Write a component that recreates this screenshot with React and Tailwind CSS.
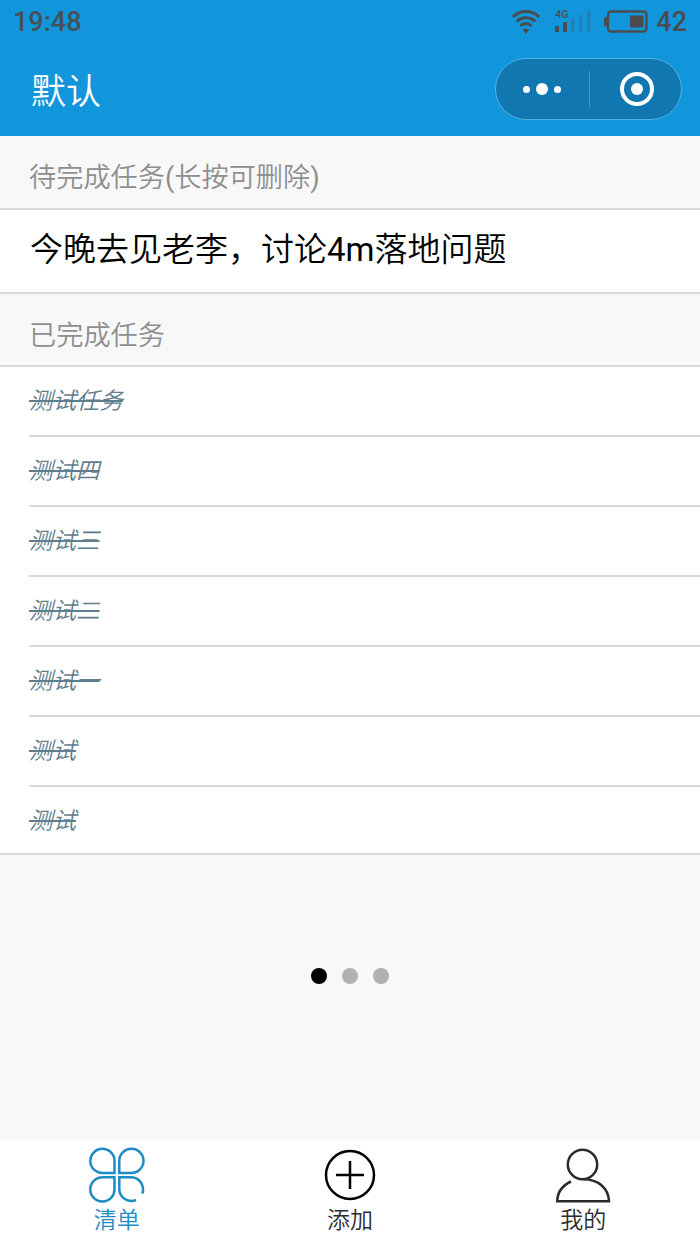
import React, { useState } from "react";

const doneTasks = ["测试任务", "测试四", "测试三", "测试二", "测试一", "测试", "测试"];

const StatusBar = () => {
  return (
    <div className="flex h-[44px] items-center justify-between pl-[13px] pr-[13px] text-[#46505a]">
      <span className="text-[27px] leading-[44px] font-medium">19:48</span>
      <div className="flex items-center text-[#4a4c50]">
        {/* Wifi */}
        <svg width="30" height="26" viewBox="0 0 30 26" fill="none" stroke="currentColor" strokeWidth="3">
          <path d="M1.8 7.8C9.4 .8 20.6 .8 28.2 7.8" />
          <path d="M5.7 12.6C11 7.6 19 7.6 24.3 12.6" />
          <path d="M9.4 17C12.6 13.8 17.4 13.8 20.6 17" />
          <path d="M15 24.8L11.6 21Q15 18 18.4 21Z" fill="currentColor" stroke="none" />
        </svg>
        {/* Signal */}
        <div className="relative ml-[14px] h-[26px] w-[36px]">
          <span className="absolute left-0 top-[1px] text-[10.5px] leading-[10px] font-medium">4G</span>
          <svg width="36" height="26" viewBox="0 0 36 26" fill="currentColor">
            <path d="M0 17h4v6H0zM8 13h4v10H8z" />
            <path d="M16 10h3.5v13H16zM24 6h3.5v17H24zM32 2h3.5v21H32z" fill="#257fb9" />
          </svg>
        </div>
        {/* Battery */}
        <svg className="ml-[13px]" width="45" height="26" viewBox="0 0 45 26" fill="none">
          <path d="M0 8.5h4v9H0z" fill="currentColor" />
          <rect x="4" y="2.5" width="38.5" height="20" rx="3" stroke="currentColor" strokeWidth="2.4" />
          <path d="M26 6.5h13.5v12H26z" fill="currentColor" />
        </svg>
        <span className="ml-[7px] text-[27px] leading-[44px] font-medium">42</span>
      </div>
    </div>
  );
};

const NavBar = ({ title }) => {
  return (
    <div className="flex h-[90px] items-center justify-between pl-[31px] pr-[18px]">
      <h1 className="pt-[7px] text-[35px] leading-[48px] font-[350] text-white">{title}</h1>
      <div className="flex h-[62px] w-[187px] items-center rounded-full border border-[#52b1e4] bg-[#1177b0]">
        <div className="flex flex-1 items-center justify-center gap-[6px] pr-[2px]">
          <span className="size-[7px] rounded-full bg-white" />
          <span className="size-[12px] rounded-full bg-white" />
          <span className="size-[7px] rounded-full bg-white" />
        </div>
        <span className="h-[37px] w-px bg-[#4999c6]" />
        <div className="flex flex-1 justify-center">
          <svg className="ml-[2px]" width="36" height="36" viewBox="0 0 36 36" fill="none">
            <circle cx="18" cy="18" r="15" stroke="#fff" strokeWidth="4" />
            <circle cx="18" cy="18" r="6" fill="#fff" />
          </svg>
        </div>
      </div>
    </div>
  );
};

const SectionTitle = ({ children, className }) => {
  return (
    <h2
      className={
        "border-b-2 border-[#d9d9d9] pl-[29px] pt-[22px] text-[27.2px] leading-[40px] font-[350] text-[#8e8e8e] " +
        className
      }
    >
      {children}
    </h2>
  );
};

const ListIcon = () => (
  <svg width="56" height="56" viewBox="0 0 56 56" fill="none" stroke="currentColor" strokeWidth="2.5">
    <path d="M25.5 26H13.7A12.1 12.1 0 1 1 25.5 13.7Z" />
    <path d="M30.3 26V13.7A12.1 12.1 0 1 1 42.2 26Z" />
    <path d="M25.5 30.3V42.2A12.1 12.1 0 1 1 13.7 30.3Z" />
    <path d="M47 53A12.1 12.1 0 0 1 30.3 42.2V30.3H42.2A12.1 12.1 0 0 1 53.3 46.5" />
  </svg>
);

const AddIcon = () => (
  <svg width="56" height="56" viewBox="0 0 56 56" fill="none" stroke="#000" strokeWidth="2.5">
    <circle cx="28" cy="28" r="24" />
    <path d="M28 14v28M14 28h28" />
  </svg>
);

const UserIcon = () => (
  <svg width="56" height="56" viewBox="0 0 56 56" fill="none" stroke="#2b2b2b" strokeWidth="2.5">
    <circle cx="27.5" cy="17.5" r="14.7" />
    <path d="M16 34.5C7.5 38.5 2.4 45 2.2 54.2H54C53.6 41.5 43.5 32.2 28.5 32.2" />
  </svg>
);

const tabs = [
  { name: "清单", icon: ListIcon },
  { name: "添加", icon: AddIcon },
  { name: "我的", icon: UserIcon },
];

const App = () => {
  const [active, setActive] = useState(0);

  return (
    <div className="flex h-[1244px] w-[700px] flex-col overflow-hidden bg-[#f8f8f8] font-[Roboto,'Noto_Sans_CJK_SC',sans-serif]">
      <header className="h-[136px] shrink-0 bg-[#1296db]">
        <StatusBar />
        <NavBar title="默认" />
      </header>

      <SectionTitle className="pb-[10px]">
        待完成任务<span className="font-normal">(</span>长按可删除<span className="font-normal">)</span>
      </SectionTitle>
      <div className="h-[84px] border-b-2 border-[#d9d9d9] bg-white pl-[30px] pt-[16px] text-[33px] leading-[48px] font-[350] text-black">
        今晚去见老李，讨论<span className="font-normal">4m</span>落地问题
      </div>

      <SectionTitle className="pb-[9px]">已完成任务</SectionTitle>
      <ul className="h-[488px] border-b-2 border-[#d9d9d9] bg-white pl-[29px]">
        {doneTasks.map((task, i) => (
          <li
            key={i}
            className="h-[70px] border-b-2 border-[#d9d9d9] pt-[17px] text-[23.5px] leading-[34px] font-[350] text-[#5f7d8c] last:border-b-0"
          >
            <span className="italic line-through">{task}</span>
          </li>
        ))}
      </ul>

      {/* Swiper dots */}
      <div className="mt-[113px] flex justify-center gap-[15px]">
        <span className="size-[16px] rounded-full bg-black" />
        <span className="size-[16px] rounded-full bg-[#b1b1b1]" />
        <span className="size-[16px] rounded-full bg-[#b1b1b1]" />
      </div>

      {/* Tab bar */}
      <nav className="mt-auto grid h-[105px] grid-cols-3 bg-white">
        {tabs.map(({ name, icon: Icon }, i) => (
          <button
            key={name}
            onClick={() => setActive(i)}
            className={
              "flex flex-col items-center gap-[2px] pt-[8px] text-[23px] leading-[32px] font-[350] " +
              (active === i ? "text-[#1e8cc4]" : "text-[#2b2b2b]")
            }
          >
            <Icon />
            {name}
          </button>
        ))}
      </nav>
    </div>
  );
};

export default App;
